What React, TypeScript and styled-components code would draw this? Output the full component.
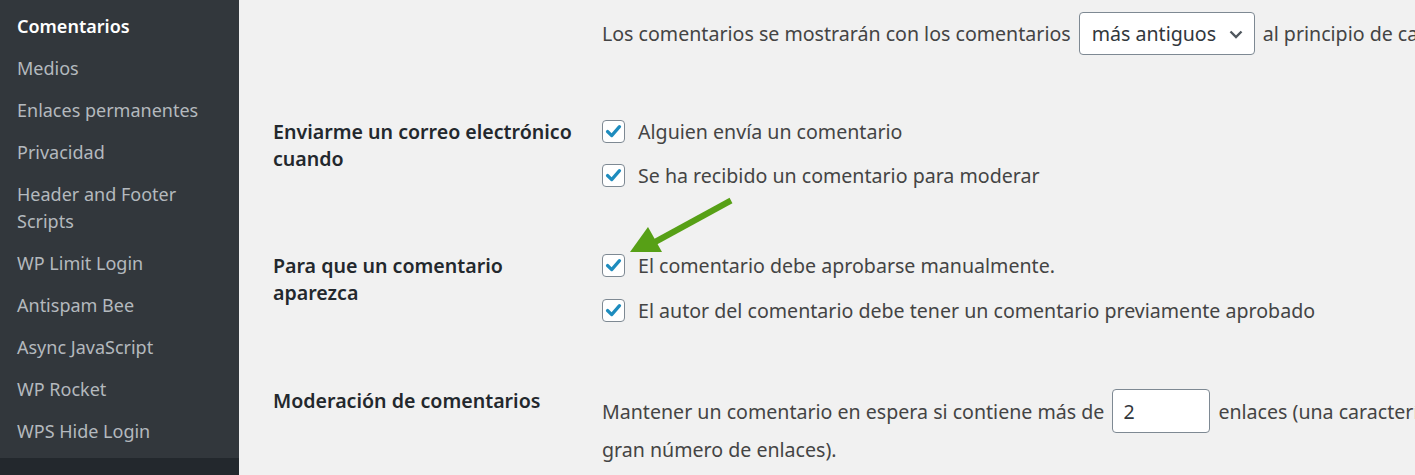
import React from "react";
import styled, { createGlobalStyle } from "styled-components";

const Global = createGlobalStyle`
  html, body { margin: 0; padding: 0; overflow: hidden; background: #f1f1f1; }
  body { font-family: "Noto Sans", "Open Sans", sans-serif; }
`;

const Page = styled.div`
  display: flex;
  width: 1415px;
  height: 475px;
  position: relative;
  overflow: hidden;
`;

const Sidebar = styled.nav`
  width: 239px;
  flex: none;
  background: #32373c;
  display: flex;
  flex-direction: column;
`;

const SubMenu = styled.ul`
  list-style: none;
  margin: 0;
  padding: 5px 0 0;
  height: 458px;
  box-sizing: border-box;
`;

const MenuItem = styled.li<{ $current?: boolean }>`
  padding: 7.5px 10px 7.5px 17px;
  font-size: 18px;
  line-height: 27px;
  color: ${(p) => (p.$current ? "#ffffff" : "#b4b9be")};
  font-weight: ${(p) => (p.$current ? 600 : 400)};
`;

const NextMenu = styled.div`
  flex: 1;
  background: #23282d;
`;

const Main = styled.main`
  flex: 1;
  padding-left: 34px;
  color: #444;
  font-size: 19.6px;
  white-space: nowrap;
`;

const Row = styled.div<{ $pad: string }>`
  display: grid;
  grid-template-columns: 329px auto;
  padding: ${(p) => p.$pad};
`;

const Label = styled.div`
  color: #23282d;
  font-weight: 600;
  line-height: 27px;
  white-space: normal;
  width: 300px;
`;

const Field = styled.div`
  display: flex;
  flex-direction: column;
  gap: 17.5px;
`;

const InlineLine = styled.div<{ $h: number }>`
  display: flex;
  align-items: center;
  gap: 8px;
  height: ${(p) => p.$h}px;
`;

const Select = styled.div`
  width: 176px;
  height: 43px;
  box-sizing: border-box;
  border: 1px solid #7e8993;
  border-radius: 4px;
  background: #fff;
  display: flex;
  align-items: center;
  justify-content: space-between;
  padding: 0 10px 0 12px;
  color: #32373c;
`;

const NumberInput = styled.div`
  width: 98px;
  height: 44px;
  box-sizing: border-box;
  border: 1px solid #7e8993;
  border-radius: 4px;
  background: #fff;
  display: flex;
  align-items: center;
  padding-left: 10px;
  color: #32373c;
`;

const CheckLine = styled.label`
  display: flex;
  align-items: center;
  gap: 13px;
  height: 27px;
`;

const Box = styled.span`
  width: 23px;
  height: 23px;
  box-sizing: border-box;
  border: 1.5px solid #7e8993;
  border-radius: 4px;
  background: #fff;
  display: flex;
  align-items: center;
  justify-content: center;
  flex: none;
`;

const PlainLine = styled.div`
  line-height: 34px;
`;

const Arrow = styled.svg`
  position: absolute;
  left: 620px;
  top: 190px;
  width: 130px;
  height: 70px;
  pointer-events: none;
`;

const Check = ({ text }: { text: string }) => (
  <CheckLine>
    <Box>
      <svg width="17" height="17" viewBox="0 0 17 17">
        <path d="M2.5 8.5 L6.7 12.6 L14.5 3.6" fill="none" stroke="#1e8cbe" strokeWidth="3.2" strokeLinecap="round" strokeLinejoin="round" />
      </svg>
    </Box>
    {text}
  </CheckLine>
);

export default function App() {
  const items = [
    "Medios",
    "Enlaces permanentes",
    "Privacidad",
    "Header and Footer Scripts",
    "WP Limit Login",
    "Antispam Bee",
    "Async JavaScript",
    "WP Rocket",
    "WPS Hide Login",
  ];
  return (
    <Page>
      <Global />
      <Sidebar>
        <SubMenu>
          <MenuItem $current>Comentarios</MenuItem>
          {items.map((t) =>
            t === "Header and Footer Scripts" ? (
              <MenuItem key={t}>
                Header and Footer
                <br />
                Scripts
              </MenuItem>
            ) : (
              <MenuItem key={t}>{t}</MenuItem>
            )
          )}
        </SubMenu>
        <NextMenu />
      </Sidebar>
      <Main>
        <Row $pad="12px 0 0">
          <div />
          <InlineLine $h={43}>
            Los comentarios se mostrarán con los comentarios
            <Select>
              más antiguos
              <svg width="16" height="16" viewBox="0 0 16 16">
                <path d="M2.5 5.5 L8 11 L13.5 5.5" fill="none" stroke="#50575e" strokeWidth="2.4" />
              </svg>
            </Select>
            al principio de cada página
          </InlineLine>
        </Row>
        <Row $pad="62.5px 0 0">
          <Label>Enviarme un correo electrónico cuando</Label>
          <Field>
            <Check text="Alguien envía un comentario" />
            <Check text="Se ha recibido un comentario para moderar" />
          </Field>
        </Row>
        <Row $pad="63px 0 0">
          <Label>Para que un comentario aparezca</Label>
          <Field>
            <Check text="El comentario debe aprobarse manualmente." />
            <Check text="El autor del comentario debe tener un comentario previamente aprobado" />
          </Field>
        </Row>
        <Row $pad="63px 0 0">
          <Label>Moderación de comentarios</Label>
          <div>
            <InlineLine $h={44} style={{ marginTop: 2.5 }}>
              Mantener un comentario en espera si contiene más de
              <NumberInput>2</NumberInput>
              enlaces (una característica común del spam de comentarios es un
            </InlineLine>
            <PlainLine>gran número de enlaces).</PlainLine>
          </div>
        </Row>
      </Main>
      <Arrow viewBox="0 0 130 70">
        <line x1="111" y1="10.5" x2="35" y2="52" stroke="#57a016" strokeWidth="6" />
        <polygon points="10,62 28,37 42,62" fill="#57a016" />
      </Arrow>
    </Page>
  );
}
